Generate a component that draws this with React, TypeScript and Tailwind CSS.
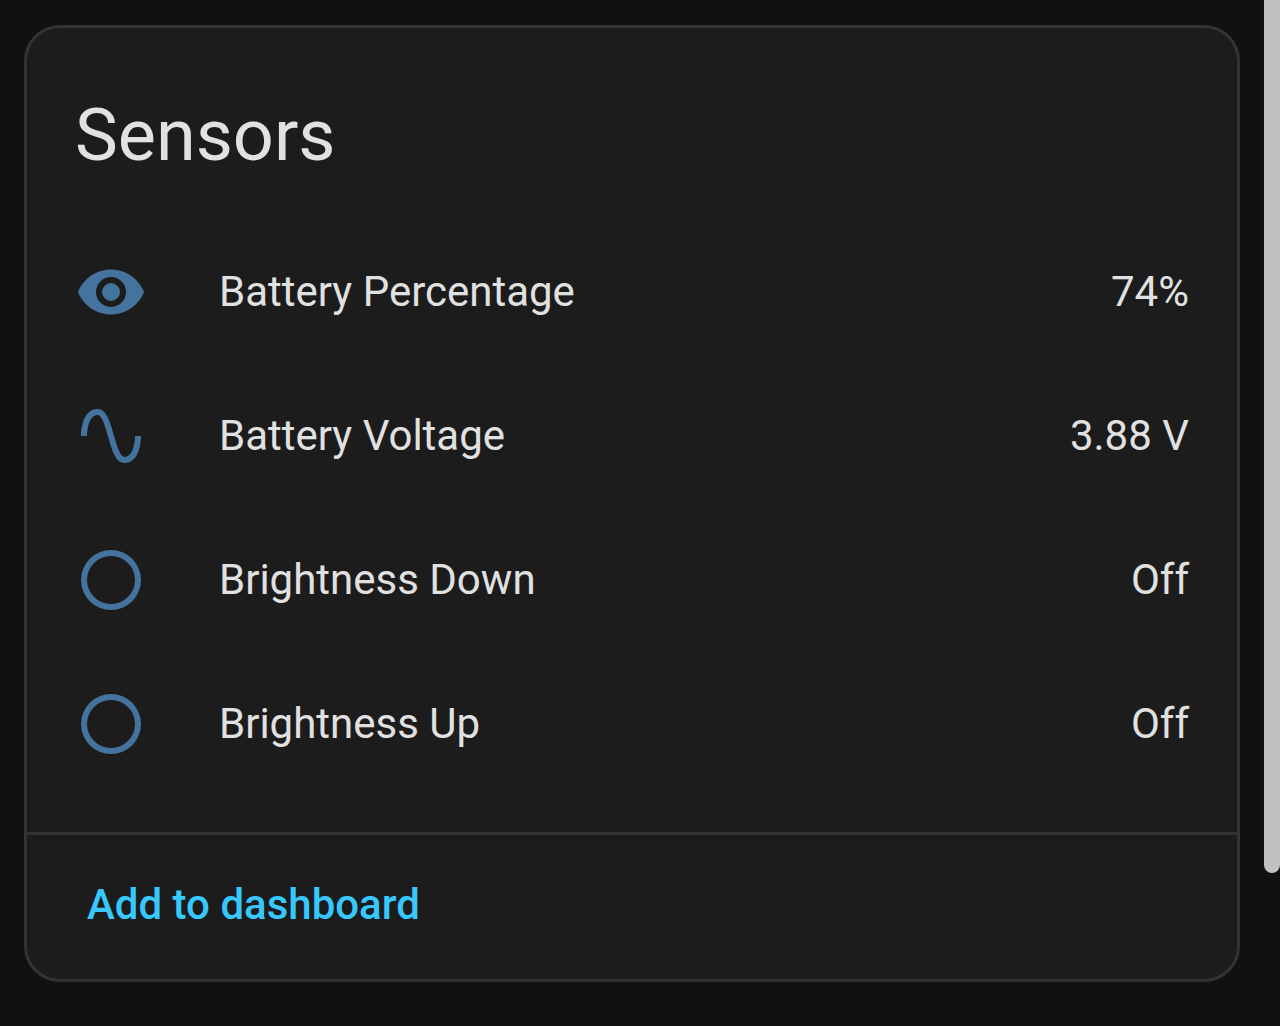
import React from "react";

type Sensor = { name: string; state: string; icon: string };

const EYE =
  "M12,9A3,3 0 0,0 9,12A3,3 0 0,0 12,15A3,3 0 0,0 15,12A3,3 0 0,0 12,9M12,17A5,5 0 0,1 7,12A5,5 0 0,1 12,7A5,5 0 0,1 17,12A5,5 0 0,1 12,17M12,4.5C7,4.5 2.73,7.61 1,12C2.73,16.39 7,19.5 12,19.5C17,19.5 21.27,16.39 23,12C21.27,7.61 17,4.5 12,4.5Z";
const SINE =
  "M16.5,21C13.5,21 12.31,16.76 11.05,12.28C10.14,9.04 9,5 7.5,5C4.11,5 4,11.93 4,12H2C2,11.63 2.06,3 7.5,3C10.5,3 11.71,7.25 12.97,11.74C13.83,14.8 15,19 16.5,19C19.94,19 20.03,12.07 20.03,12H22.03C22.03,12.37 21.97,21 16.5,21Z";
const CIRCLE =
  "M12,20A8,8 0 0,1 4,12A8,8 0 0,1 12,4A8,8 0 0,1 20,12A8,8 0 0,1 12,20M12,2A10,10 0 0,0 2,12A10,10 0 0,0 12,22A10,10 0 0,0 22,12A10,10 0 0,0 12,2Z";

const sensors: Sensor[] = [
  { name: "Battery Percentage", state: "74%", icon: EYE },
  { name: "Battery Voltage", state: "3.88 V", icon: SINE },
  { name: "Brightness Down", state: "Off", icon: CIRCLE },
  { name: "Brightness Up", state: "Off", icon: CIRCLE },
];

export default function App() {
  return (
    <div className="flex min-h-screen items-start bg-[#111111] font-[Roboto,sans-serif] text-[#e1e1e1]">
      <main className="min-w-0 flex-1 px-6 pt-[25px] pb-11">
        <section className="rounded-[36px] border-3 border-[#333333] bg-[#1c1c1c]">
          <h1 className="px-12 pt-[60px] text-[72px] leading-[96px]">Sensors</h1>
          <ul className="flex flex-col gap-6 p-12">
            {sensors.map((s) => (
              <li key={s.name} className="flex min-h-[120px] items-center gap-[72px] text-[42px] leading-[60px]">
                <svg viewBox="0 0 24 24" className="size-[72px] shrink-0 fill-[#44739e]" aria-hidden="true">
                  <path d={s.icon} />
                </svg>
                <span className="flex-1">{s.name}</span>
                <span>{s.state}</span>
              </li>
            ))}
          </ul>
          <footer className="flex border-t-3 border-[#333333] px-6 pt-10 pb-11">
            <button type="button" className="px-9 text-[42px] leading-[60px] font-medium text-[#37c8fd]">
              Add to dashboard
            </button>
          </footer>
        </section>
      </main>
      <div className="h-[873px] w-4 shrink-0 rounded-b-full bg-[#c1c1c1]" aria-hidden="true" />
    </div>
  );
}
